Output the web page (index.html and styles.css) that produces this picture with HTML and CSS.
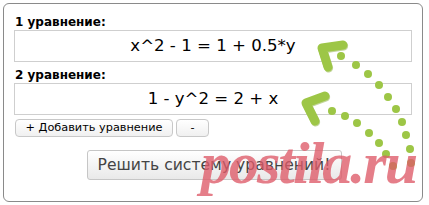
FILE: index.html
```html
<!DOCTYPE html>
<html lang="ru">
<head>
<meta charset="utf-8">
<link rel="stylesheet" href="styles.css">
</head>
<body>
<div class="panel">
  <div class="field">
    <div class="label">1 уравнение:</div>
    <div class="eq">x^2 - 1 = 1 + 0.5*y</div>
  </div>
  <div class="field">
    <div class="label">2 уравнение:</div>
    <div class="eq">1 - y^2 = 2 + x</div>
  </div>
  <div class="actions">
    <button class="btn add">+ Добавить уравнение</button>
    <button class="btn minus">-</button>
  </div>
  <div class="solve-row">
    <button class="solve">Решить систему уравнений!</button>
  </div>
  <svg class="arrows" width="429" height="205" viewBox="0 0 429 205">
    <g fill="none" stroke="#86ad37" stroke-width="9" stroke-linecap="round" stroke-linejoin="round" transform="translate(0.6 1)" opacity="0.5">
      <path d="M343 45 L322 48 L328 67"/>
      <path d="M325 96 L306 103 L315 121"/>
    </g>
    <g fill="none" stroke="#9dc646" stroke-width="9" stroke-linecap="round" stroke-linejoin="round">
      <path d="M343 45 L322 48 L328 67"/>
      <path d="M325 96 L306 103 L315 121"/>
    </g>
    <g fill="#9dc646">
      <circle cx="341" cy="56" r="4"/>
      <circle cx="356" cy="65" r="4"/>
      <circle cx="368" cy="74" r="4"/>
      <circle cx="379" cy="85" r="4"/>
      <circle cx="388" cy="97" r="4"/>
      <circle cx="396" cy="109" r="4"/>
      <circle cx="402" cy="122" r="4"/>
      <circle cx="406" cy="135" r="4"/>
      <circle cx="410" cy="149" r="4"/>
      <circle cx="411" cy="163" r="4"/>
      <circle cx="332" cy="111" r="4"/>
      <circle cx="345" cy="116" r="4"/>
      <circle cx="357" cy="123" r="4"/>
      <circle cx="369" cy="133" r="4"/>
      <circle cx="379" cy="143" r="4"/>
      <circle cx="386" cy="154" r="4"/>
      <circle cx="393" cy="166" r="4"/>
    </g>
  </svg>
  <div class="watermark">postila.ru</div>
</div>
</body>
</html>
```
FILE: styles.css
```css
html, body {
  margin: 0;
  padding: 0;
  background: #fff;
}
body {
  width: 429px;
  height: 205px;
  overflow: hidden;
  font-family: "DejaVu Sans", Verdana, sans-serif;
}
.panel {
  position: relative;
  margin: 3px 0 0 3px;
  width: 418px;
  height: 197px;
  border: 1px solid #8a8a8a;
  border-radius: 6px;
  box-sizing: content-box;
  padding: 0;
  display: flex;
  flex-direction: column;
}
.field {
  display: flex;
  flex-direction: column;
  padding: 0 10px;
}
.field:first-child {
  margin-top: 11px;
}
.field + .field {
  margin-top: 6px;
}
.label {
  font-size: 12px;
  font-weight: bold;
  line-height: 14px;
  color: #000;
  padding-left: 1px;
  margin-bottom: 1px;
}
.eq {
  height: 32px;
  box-sizing: border-box;
  border: 1px solid #cfcfcf;
  font-size: 16.6px;
  line-height: 30px;
  text-align: center;
  color: #000;
}
.actions {
  display: flex;
  gap: 3px;
  padding: 0 11px;
  margin-top: 4px;
}
.btn {
  height: 18px;
  box-sizing: border-box;
  border: 1px solid #c8c8c8;
  border-radius: 4px;
  background: linear-gradient(#ffffff, #f0f0f0);
  font-family: "DejaVu Sans", Verdana, sans-serif;
  font-size: 11.3px;
  line-height: 14px;
  color: #000;
  padding: 0;
}
.add {
  width: 158px;
}
.minus {
  width: 33px;
}
.solve-row {
  display: flex;
  justify-content: center;
  margin-top: 13px;
}
.solve {
  width: 255px;
  height: 30px;
  box-sizing: border-box;
  border: 1px solid #c6c6c6;
  border-radius: 3px;
  background: linear-gradient(#ffffff, #e9e9e9);
  font-family: "DejaVu Sans", Verdana, sans-serif;
  font-size: 15.6px;
  color: #444;
  padding: 0;
  margin-left: 2px;
}
.arrows {
  position: absolute;
  left: -4px;
  top: -4px;
  pointer-events: none;
}
.watermark {
  position: absolute;
  left: 197px;
  top: 124px;
  font-family: "Liberation Serif", serif;
  font-style: italic;
  font-weight: bold;
  font-size: 60px;
  line-height: 70px;
  color: rgba(222, 90, 104, 0.78);
  letter-spacing: -2px;
  pointer-events: none;
}
```
